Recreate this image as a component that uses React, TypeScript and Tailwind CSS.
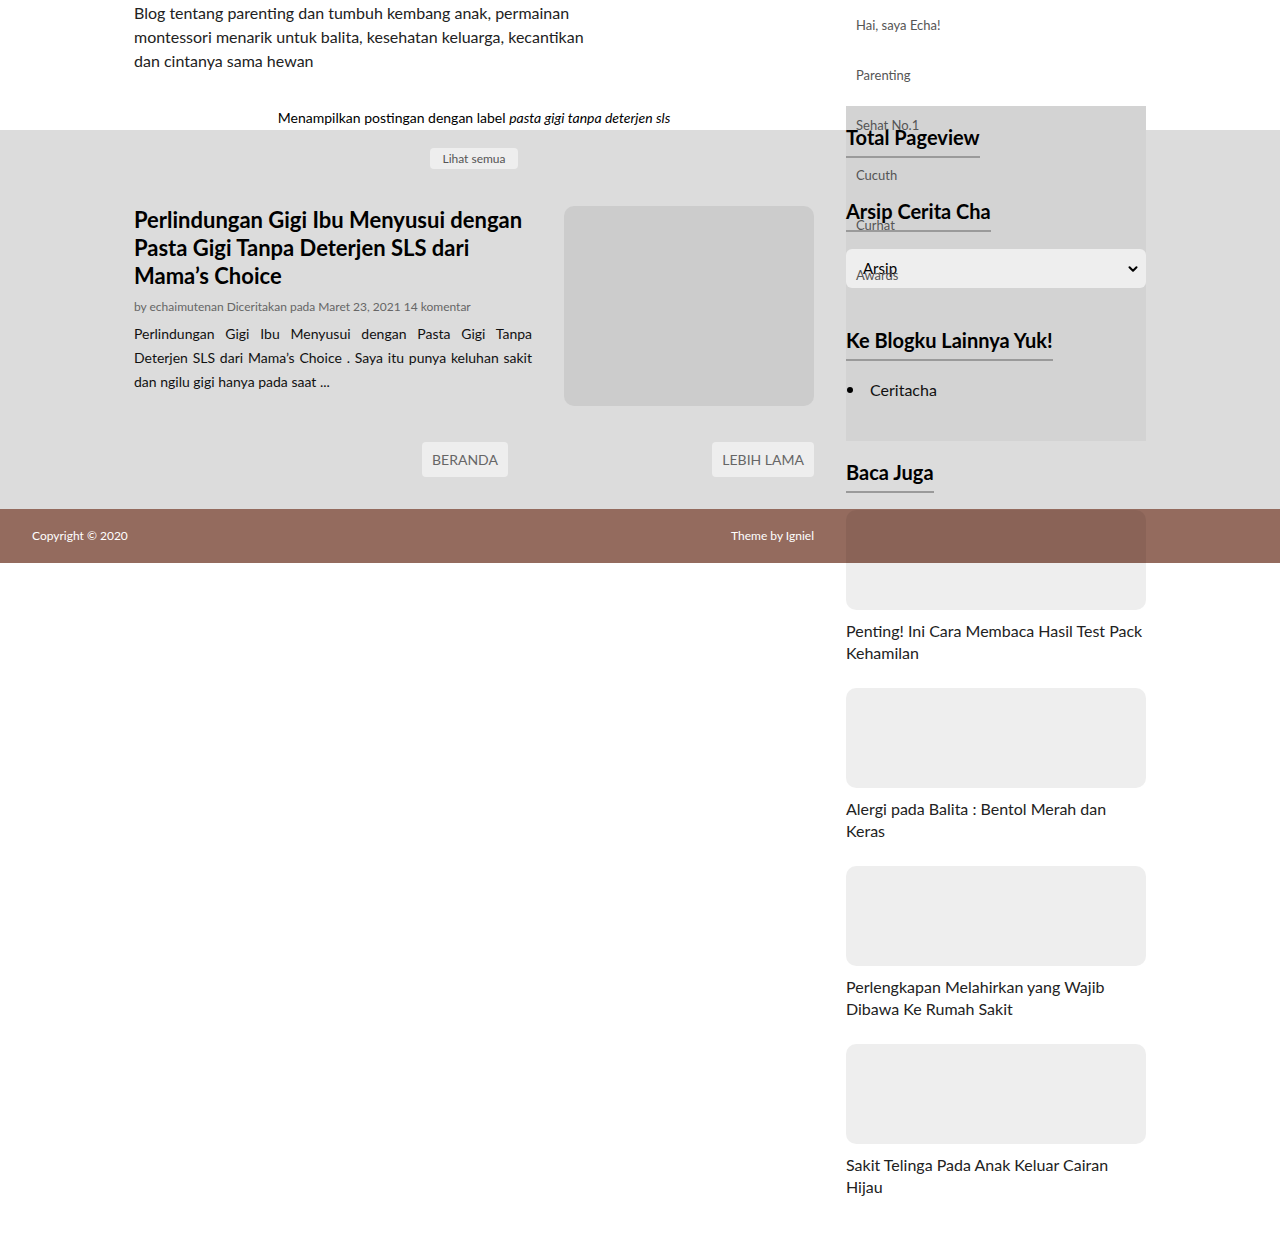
import React from "react";
import { ChevronDown } from "lucide-react";

const font = { fontFamily: "Lato, 'Noto Sans', sans-serif" };

const menu = ["Hai, saya Echa!", "Parenting", "Sehat No.1", "Cucuth", "Curhat", "Awards"];

const related = [
  "Penting! Ini Cara Membaca Hasil Test Pack Kehamilan",
  "Alergi pada Balita : Bentol Merah dan Keras",
  "Perlengkapan Melahirkan yang Wajib Dibawa Ke Rumah Sakit",
  "Sakit Telinga Pada Anak Keluar Cairan Hijau",
];

function WidgetTitle({ children }: { children: React.ReactNode }) {
  return (
    <h3 className="inline-block border-b-2 border-[#9a9a9a] pb-[6px] text-[20px] font-bold leading-[26px] text-black">
      {children}
    </h3>
  );
}

function Sidebar() {
  return (
    <aside className="relative z-10 h-0 w-[300px] shrink-0 overflow-visible">
      <ul className="absolute left-0 top-[1px] z-20 w-[300px]">
        {menu.map((m) => (
          <li key={m} className="flex h-[50px] items-center pl-[10px] text-[13px] text-[#555]">
            {m}
          </li>
        ))}
      </ul>
      <div className="mt-[106px] bg-[#d3d3d3] pb-[40px] pt-[18px]">
        <div>
          <WidgetTitle>Total Pageview</WidgetTitle>
        </div>
        <div className="mt-[40px]">
          <WidgetTitle>Arsip Cerita Cha</WidgetTitle>
          <div className="mt-[17px] flex h-[39px] items-center justify-between rounded-[6px] bg-[#eeeeee] pl-[17px] pr-[6px] text-[15px] text-black">
            <span>Arsip</span>
            <ChevronDown size={14} strokeWidth={3.5} />
          </div>
        </div>
        <div className="mt-[39px]">
          <WidgetTitle>Ke Blogku Lainnya Yuk!</WidgetTitle>
          <ul className="mt-[18px]">
            <li className="flex items-center gap-[17px] text-[16px] leading-[22px] text-[#111]">
              <span className="ml-[1px] h-[6px] w-[6px] rounded-full bg-black" />
              Ceritacha
            </li>
          </ul>
        </div>
      </div>
      <div className="mt-[18px]">
        <WidgetTitle>Baca Juga</WidgetTitle>
        <div className="mt-[17px] flex flex-col gap-[24px]">
          {related.map((r) => (
            <div key={r}>
              <div className="h-[100px] w-[300px] rounded-[10px] bg-[rgba(0,0,0,0.067)]" />
              <p className="mt-[10px] text-[16px] leading-[22px] text-[#222]">{r}</p>
            </div>
          ))}
        </div>
      </div>
    </aside>
  );
}

export default function App() {
  return (
    <div className="min-h-[1235px] bg-white" style={font}>
      {/* header */}
      <header className="bg-white">
        <div className="mx-auto flex w-[1012px] gap-[32px]">
          <div className="w-[680px] shrink-0">
            <p className="w-[470px] pt-[1px] text-[16px] leading-[24px] text-[#222]">
              Blog tentang parenting dan tumbuh kembang anak, permainan montessori menarik untuk balita, kesehatan keluarga, kecantikan dan cintanya sama hewan
            </p>
            <p className="mt-[35px] text-center text-[14px] leading-[20px] text-black">
              Menampilkan postingan dengan label <i>pasta gigi tanpa deterjen sls</i>
            </p>
          </div>
          <Sidebar />
        </div>
      </header>

      {/* main band */}
      <main className="mt-[2px] bg-[#dcdcdc] pb-[32px] pt-[18px]">
        <div className="mx-auto w-[1012px]">
          <div className="w-[680px]">
            <div className="flex justify-center">
              <span className="rounded-[4px] bg-[#eeeeee] px-[12px] py-[2px] text-[12px] leading-[17px] text-[#555]">
                Lihat semua
              </span>
            </div>
            <article className="mt-[37px] flex gap-[32px]">
              <div className="w-[398px] shrink-0">
                <h2 className="text-[22px] font-bold leading-[28px] text-black">
                  Perlindungan Gigi Ibu Menyusui dengan Pasta Gigi Tanpa Deterjen SLS dari Mama’s Choice
                </h2>
                <p className="mt-[8px] text-[12px] leading-[18px] text-[#666]">
                  by echaimutenan Diceritakan pada Maret 23, 2021 14 komentar
                </p>
                <p className="mt-[6px] text-justify text-[14px] leading-[24px] text-[#111]">
                  Perlindungan Gigi Ibu Menyusui dengan Pasta Gigi Tanpa Deterjen SLS dari Mama’s Choice . Saya itu punya keluhan sakit dan ngilu gigi hanya pada saat ...
                </p>
              </div>
              <div className="h-[200px] w-[250px] rounded-[10px] bg-[#cccccc]" />
            </article>
            <nav className="mt-[36px] flex justify-between pl-[288px]">
              <span className="flex h-[35px] items-center rounded-[4px] bg-[#eeeeee] px-[10px] text-[14px] uppercase text-[#666]">
                Beranda
              </span>
              <span className="flex h-[35px] items-center rounded-[4px] bg-[#eeeeee] px-[10px] text-[14px] uppercase text-[#666]">
                Lebih Lama
              </span>
            </nav>
          </div>
        </div>
      </main>

      {/* footer */}
      <footer className="flex h-[54px] items-center justify-between bg-[#946b5e] pl-[32px] pr-[466px] text-[12px] text-white">
        <span>Copyright © 2020</span>
        <span>Theme by Igniel</span>
      </footer>
    </div>
  );
}
